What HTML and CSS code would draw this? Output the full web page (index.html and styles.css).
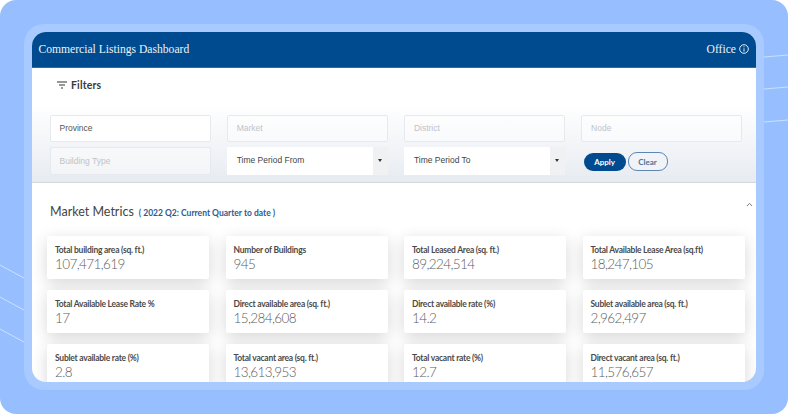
FILE: index.html
```html
<!DOCTYPE html>
<html lang="en">
<head>
    <meta charset="UTF-8">
    <title>Commercial Listings Dashboard</title>
    <link rel="stylesheet" href="styles.css">
</head>
<body>
    <div class="backdrop">
        <svg class="backdrop-lines" width="788" height="414" viewBox="0 0 788 414" fill="none" stroke="#dbe7ff" stroke-width="0.8">
            <path d="M0 265L24 278M0 297L24 310M0 329L24 342"/>
            <path d="M764 57L788 55M764 89L788 87M764 122L788 120"/>
        </svg>
        <div class="frame">
            <div class="app">
                <header class="app-header">
                    <span class="app-title">Commercial Listings Dashboard</span>
                    <span class="app-type">Office
                        <svg width="10" height="10" viewBox="0 0 10 10" fill="none" stroke="#fff" stroke-width="0.9">
                            <circle cx="5" cy="5" r="4.3"/>
                            <path d="M5 4.4V7.6M5 2.4V3.4"/>
                        </svg>
                    </span>
                </header>

                <section class="filters">
                    <div class="filters-title">
                        <svg width="10" height="8" viewBox="0 0 10 8" fill="none" stroke="#333" stroke-width="1.1">
                            <path d="M0 1H10M2 4H8M4 7H6"/>
                        </svg>
                        <span>Filters</span>
                    </div>
                    <div class="filters-grid">
                        <div class="field">Province</div>
                        <div class="field disabled">Market</div>
                        <div class="field disabled">District</div>
                        <div class="field disabled">Node</div>
                        <div class="field disabled">Building Type</div>
                        <div class="select">
                            <span class="select-text">Time Period From</span>
                            <span class="select-arrow"></span>
                        </div>
                        <div class="select">
                            <span class="select-text">Time Period To</span>
                            <span class="select-arrow"></span>
                        </div>
                        <div class="filter-actions">
                            <button class="btn btn-apply">Apply</button>
                            <button class="btn btn-clear">Clear</button>
                        </div>
                    </div>
                </section>

                <section class="metrics">
                    <div class="metrics-head">
                        <h2 class="metrics-title">Market Metrics</h2>
                        <span class="metrics-period">( 2022 Q2: Current Quarter to date )</span>
                        <svg class="metrics-toggle" width="7" height="5" viewBox="0 0 7 5" fill="none" stroke="#777" stroke-width="1">
                            <path d="M0.9 4L3.5 1.4L6.1 4"/>
                        </svg>
                    </div>
                    <div class="metrics-grid">
                        <div class="card"><div class="card-label">Total building area (sq. ft.)</div><div class="card-value">107,471,619</div></div>
                        <div class="card"><div class="card-label">Number of Buildings</div><div class="card-value">945</div></div>
                        <div class="card"><div class="card-label">Total Leased Area (sq. ft.)</div><div class="card-value">89,224,514</div></div>
                        <div class="card"><div class="card-label">Total Available Lease Area (sq.ft)</div><div class="card-value">18,247,105</div></div>
                        <div class="card"><div class="card-label">Total Available Lease Rate %</div><div class="card-value">17</div></div>
                        <div class="card"><div class="card-label">Direct available area (sq. ft.)</div><div class="card-value">15,284,608</div></div>
                        <div class="card"><div class="card-label">Direct available rate (%)</div><div class="card-value">14.2</div></div>
                        <div class="card"><div class="card-label">Sublet available area (sq. ft.)</div><div class="card-value">2,962,497</div></div>
                        <div class="card"><div class="card-label">Sublet available rate (%)</div><div class="card-value">2.8</div></div>
                        <div class="card"><div class="card-label">Total vacant area (sq. ft.)</div><div class="card-value">13,613,953</div></div>
                        <div class="card"><div class="card-label">Total vacant rate (%)</div><div class="card-value">12.7</div></div>
                        <div class="card"><div class="card-label">Direct vacant area (sq. ft.)</div><div class="card-value">11,576,657</div></div>
                    </div>
                </section>
            </div>
        </div>
    </div>
</body>
</html>
```

FILE: styles.css
```css
* {
    margin: 0;
    padding: 0;
    box-sizing: border-box;
}

html, body {
    width: 788px;
    height: 414px;
    overflow: hidden;
    background-color: #fff;
}

.backdrop {
    position: relative;
    width: 788px;
    height: 414px;
    padding: 24px;
    background-color: #97bfff;
    border-radius: 16px;
}

.backdrop-lines {
    position: absolute;
    top: 0;
    left: 0;
}

.frame {
    position: relative;
    height: 366px;
    padding: 8px;
    background-color: #a8caff;
    border-radius: 20px;
}

.app {
    height: 350px;
    overflow: hidden;
    background-color: #fff;
    border-radius: 14px;
}

.app-header {
    display: flex;
    justify-content: space-between;
    align-items: center;
    height: 36px;
    padding: 0 7px 1px 6.5px;
    background-color: #004b8f;
    border-bottom: 1px solid #2f6aa3;
    color: #eef3f9;
    font-family: "Liberation Serif", serif;
    font-size: 11.6px;
}

.app-type {
    display: flex;
    align-items: center;
    gap: 3px;
}

.filters {
    height: 115px;
    padding: 0 13px 0 17.5px;
    background: linear-gradient(to bottom, #fff 0, #fff 36px, #e7ebf1 100%);
    border-bottom: 1px solid #d3d8df;
}

.filters-title {
    display: flex;
    align-items: center;
    gap: 4px;
    height: 34px;
    padding-left: 7.5px;
    font-family: "Lato", sans-serif;
    font-size: 10.5px;
    font-weight: 700;
    letter-spacing: 0.15px;
    color: #3a3a3a;
}

.filters-grid {
    display: grid;
    grid-template-columns: repeat(4, 161.2px);
    grid-template-rows: 27px 28px;
    column-gap: 16px;
    row-gap: 5px;
    margin-top: 13px;
    font-family: "Liberation Sans", sans-serif;
    font-size: 8.5px;
}

.field {
    display: flex;
    align-items: center;
    padding: 0 0 1px 9px;
    background-color: #fff;
    border: 1px solid #e6e9ee;
    border-radius: 2px;
    color: #555;
}

.field.disabled {
    background-color: rgba(255, 255, 255, 0.45);
    color: #c0c3c8;
}

.select {
    display: flex;
    height: 28px;
    background-color: #fff;
}

.select-text {
    flex: 1;
    padding: 8px 0 0 10px;
    color: #444;
}

.select-arrow {
    position: relative;
    width: 15px;
    background-color: #f0f1f3;
}

.select-arrow::after {
    content: '';
    position: absolute;
    top: 12px;
    left: 5px;
    border-top: 3px solid #333;
    border-left: 2px solid transparent;
    border-right: 2px solid transparent;
}

.filter-actions {
    display: flex;
    align-items: center;
    gap: 2px;
    padding: 1px 0 0 2.5px;
    height: 28px;
}

.btn {
    height: 18px;
    border-radius: 9px;
    font-family: "Lato", sans-serif;
    font-size: 8px;
    font-weight: 700;
}

.btn-apply {
    width: 42px;
    border: none;
    background-color: #004b8f;
    color: #fff;
}

.btn-clear {
    width: 40px;
    height: 19px;
    border: 1px solid #5b87b3;
    background-color: #f0f3f7;
    color: #4b7199;
}

.metrics {
    padding: 0 11px 0 15px;
}

.metrics-head {
    position: relative;
    display: flex;
    align-items: baseline;
    gap: 5px;
    height: 53px;
    padding: 21px 0 0 3px;
}

.metrics-title {
    font-family: "Lato", sans-serif;
    font-size: 12.5px;
    font-weight: 400;
    color: #444;
}

.metrics-period {
    font-family: "Lato", sans-serif;
    font-size: 8.5px;
    font-weight: 700;
    color: #2a5d8f;
}

.metrics-toggle {
    position: absolute;
    top: 19px;
    right: -8px;
}

.metrics-grid {
    display: grid;
    grid-template-columns: repeat(4, 162px);
    grid-auto-rows: 43px;
    column-gap: 16.5px;
    row-gap: 11px;
}

.card {
    padding: 9px 8px 0 8px;
    background-color: #fff;
    border-radius: 2px;
    box-shadow: 0 4px 16px rgba(0, 0, 0, 0.16);
    font-family: "Lato", sans-serif;
}

.card-label {
    font-size: 8.5px;
    line-height: 11px;
    font-weight: 700;
    letter-spacing: -0.25px;
    color: #4a4a4a;
}

.card-value {
    font-size: 13.5px;
    line-height: 17px;
    font-weight: 300;
    letter-spacing: -0.6px;
    color: #5c5c5c;
}
```
